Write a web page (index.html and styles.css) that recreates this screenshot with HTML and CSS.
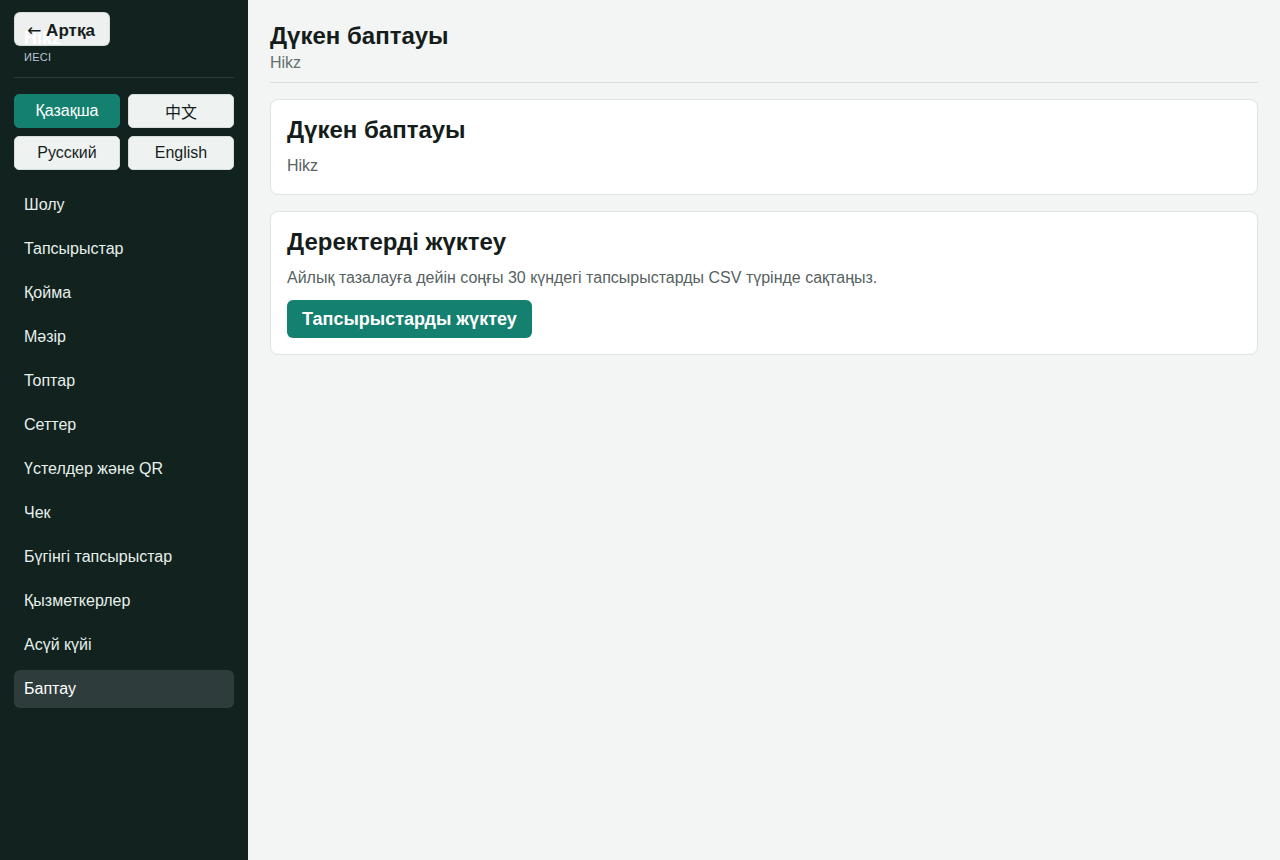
FILE: index.html
```html
<!DOCTYPE html>
<html lang="kk">
<head>
<meta charset="utf-8">
<title>Дүкен баптауы</title>
<link rel="stylesheet" href="styles.css">
</head>
<body>
<div class="layout">
  <aside class="sidebar">
    <div class="brand">
      <div class="brand-name">Hikz</div>
      <div class="brand-role">ИЕСІ</div>
    </div>
    <button class="back-btn"><span class="arrow">←</span> Артқа</button>
    <div class="langs">
      <button class="lang active">Қазақша</button>
      <button class="lang">中文</button>
      <button class="lang">Русский</button>
      <button class="lang">English</button>
    </div>
    <nav class="nav">
      <a class="nav-item">Шолу</a>
      <a class="nav-item">Тапсырыстар</a>
      <a class="nav-item">Қойма</a>
      <a class="nav-item">Мәзір</a>
      <a class="nav-item">Топтар</a>
      <a class="nav-item">Сеттер</a>
      <a class="nav-item">Үстелдер және QR</a>
      <a class="nav-item">Чек</a>
      <a class="nav-item">Бүгінгі тапсырыстар</a>
      <a class="nav-item">Қызметкерлер</a>
      <a class="nav-item">Асүй күйі</a>
      <a class="nav-item active">Баптау</a>
    </nav>
  </aside>
  <main class="main">
    <header class="page-header">
      <h1 class="page-title">Дүкен баптауы</h1>
      <div class="page-sub">Hikz</div>
    </header>
    <section class="card">
      <h2 class="card-title">Дүкен баптауы</h2>
      <p class="card-text">Hikz</p>
    </section>
    <section class="card">
      <h2 class="card-title">Деректерді жүктеу</h2>
      <p class="card-text">Айлық тазалауға дейін соңғы 30 күндегі тапсырыстарды CSV түрінде сақтаңыз.</p>
      <button class="primary-btn">Тапсырыстарды жүктеу</button>
    </section>
  </main>
</div>
</body>
</html>
```

FILE: styles.css
```css
* { box-sizing: border-box; }
html, body { margin: 0; padding: 0; height: 100%; }
body {
  font-family: "Liberation Sans", Arial, "Noto Sans CJK SC", sans-serif;
  background: #f3f5f4;
  color: #151d1b;
}
.layout {
  display: flex;
  min-height: 860px;
}
.sidebar {
  position: relative;
  width: 248px;
  flex: 0 0 248px;
  background: #11221f;
  padding: 26px 14px 20px;
  color: #e8f0ec;
}
.back-btn {
  position: absolute;
  top: 12px;
  left: 14px;
  height: 34px;
  width: 96px;
  padding: 2px 2px 0 0;
  border: 1px solid rgba(210, 218, 215, 0.9);
  border-radius: 6px;
  background: rgba(255, 255, 255, 0.93);
  color: #151d1b;
  font-family: inherit;
  font-size: 17px;
  font-weight: 700;
  cursor: pointer;
}
.arrow {
  font-family: "DejaVu Sans", sans-serif;
  font-weight: 400;
  font-size: 17px;
}
.brand {
  padding: 0 10px 13px;
  border-bottom: 1px solid #2c3d3a;
}
.brand-name {
  font-size: 18px;
  line-height: 24px;
  font-weight: 700;
  color: #ffffff;
}
.brand-role {
  font-size: 11px;
  line-height: 14px;
  color: #b9c6d6;
  letter-spacing: 0.3px;
}
.langs {
  margin-top: 16px;
  display: grid;
  grid-template-columns: 1fr 1fr;
  gap: 8px;
}
.lang {
  height: 34px;
  border: 1px solid #d6dedb;
  border-radius: 5px;
  background: #eef3f1;
  color: #151d1b;
  font-family: inherit;
  font-size: 16px;
  padding: 0;
}
.lang.active {
  background: #14806f;
  border-color: #14806f;
  color: #ffffff;
}
.nav {
  margin-top: 16px;
  display: flex;
  flex-direction: column;
  gap: 6px;
}
.nav-item {
  display: block;
  height: 38px;
  line-height: 38px;
  padding: 0 10px;
  border-radius: 6px;
  font-size: 16px;
  color: #e8f0ec;
  text-decoration: none;
}
.nav-item.active {
  background: #2e3d3b;
  color: #ffffff;
}
.main {
  flex: 1;
  padding: 22px 22px;
  display: flex;
  flex-direction: column;
  gap: 16px;
}
.page-header {
  padding-bottom: 8px;
  border-bottom: 1px solid #d8e0dd;
}
.page-title {
  margin: 0;
  font-size: 24px;
  line-height: 28px;
  font-weight: 700;
  color: #151d1b;
}
.page-sub {
  margin-top: 2px;
  font-size: 16px;
  line-height: 22px;
  color: #66716f;
}
.card {
  background: #ffffff;
  border: 1px solid #dde4e1;
  border-radius: 8px;
  padding: 16px;
  display: flex;
  flex-direction: column;
  align-items: flex-start;
}
.card-title {
  margin: 0;
  font-size: 24px;
  line-height: 28px;
  font-weight: 700;
  color: #151d1b;
}
.card-text {
  margin: 10px 0 0;
  font-size: 16px;
  line-height: 24px;
  color: #56625f;
}
.primary-btn {
  margin-top: 10px;
  height: 38px;
  padding: 0 15px;
  border: none;
  border-radius: 6px;
  background: #14806f;
  color: #ffffff;
  font-family: inherit;
  font-size: 18px;
  font-weight: 700;
}
```
